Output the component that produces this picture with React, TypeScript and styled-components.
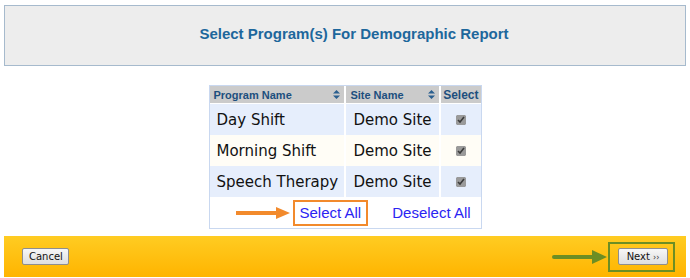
import React from "react";
import styled, { createGlobalStyle } from "styled-components";

const GlobalStyle = createGlobalStyle`
  html, body { margin: 0; padding: 0; background: #ffffff; }
  body { font-family: "DejaVu Sans", Verdana, sans-serif; }
`;

const Page = styled.div`
  width: 690px;
  height: 278px;
  box-sizing: border-box;
  padding: 5px 4px 0 4px;
  display: flex;
  flex-direction: column;
  overflow: hidden;
`;

const TitleBox = styled.div`
  height: 61px;
  box-sizing: border-box;
  background: #ededed;
  border: 1px solid #a6bacd;
  display: flex;
  align-items: center;
  justify-content: center;
  padding: 0 0 4px 18px;
`;

const Title = styled.h1`
  margin: 0;
  font-family: "Liberation Sans", Arial, sans-serif;
  font-size: 15px;
  font-weight: bold;
  color: #1d679c;
`;

const Content = styled.div`
  display: flex;
  justify-content: center;
  padding: 19px 0 7px 0;
`;

const Table = styled.table`
  border-collapse: separate;
  border-spacing: 0;
  border: 1px solid #c9d8f0;
  width: 273px;
`;

const HeadCell = styled.th<{ $w: number }>`
  width: ${(p) => p.$w}px;
  height: 18px;
  padding: 0 4px 0 4px;
  background: #cbcbcb;
  border-right: 2px solid #ffffff;
  border-bottom: 1px solid #ffffff;
  font-family: "Liberation Sans", Arial, sans-serif;
  font-size: 11px;
  font-weight: bold;
  color: #1d4f7e;
  text-align: left;
  white-space: nowrap;
  box-sizing: border-box;
  &:last-child { border-right: none; padding: 0 2px; font-size: 12px; text-align: center; }
`;

const HeadInner = styled.div`
  display: flex;
  align-items: center;
  justify-content: space-between;
`;

const Row = styled.tr<{ $alt: boolean }>`
  background: ${(p) => (p.$alt ? "#fffdf6" : "#e6eefc")};
`;

const Cell = styled.td`
  height: 31px;
  box-sizing: border-box;
  padding: 0 5px 0 7px;
  border-right: 2px solid #ffffff;
  font-family: "DejaVu Sans", Verdana, sans-serif;
  font-size: 15px;
  color: #111111;
  white-space: nowrap;
  &:last-child { border-right: none; text-align: center; padding: 0; }
`;

const Check = styled.input`
  width: 10px;
  height: 10px;
  margin: 0;
  accent-color: #9a9a9a;
  vertical-align: middle;
`;

const FootCell = styled.td`
  height: 31px;
  background: #ffffff;
  padding: 0;
`;

const FootInner = styled.div`
  display: flex;
  align-items: center;
  padding-left: 26px;
`;

const OrangeBox = styled.div`
  border: 2px solid #f28a2c;
  padding: 1px 5px 2px 5px;
  margin-left: 1px;
`;

const Link = styled.a`
  font-family: "Liberation Sans", Arial, sans-serif;
  font-size: 15px;
  color: #2a24f2;
  text-decoration: none;
  cursor: pointer;
`;

const DeselectLink = styled(Link)`
  margin-left: 24px;
`;

const Bar = styled.div`
  height: 41px;
  box-sizing: border-box;
  background: linear-gradient(#ffcc22, #ffb400);
  display: flex;
  align-items: center;
  justify-content: space-between;
  padding: 0 11px 0 18px;
`;

const Button = styled.button`
  height: 17px;
  box-sizing: border-box;
  padding: 0 6px;
  background: linear-gradient(#f7f7f7, #dedede);
  border: 1px solid #8e8e8e;
  border-radius: 2px;
  font-family: "DejaVu Sans", Verdana, sans-serif;
  font-size: 10px;
  color: #111;
  line-height: 15px;
`;

const CancelButton = styled(Button)`
  width: 47px;
`;

const NextButton = styled(Button)`
  width: 50px;
  padding: 0 4px;
`;

const Chev = styled.span`
  font-size: 8px;
  margin-left: 3px;
  color: #333;
`;

const NextGroup = styled.div`
  display: flex;
  align-items: center;
`;

const GreenBox = styled.div`
  border: 2px solid #6c8e24;
  padding: 4px 5px 5px 8px;
  display: flex;
`;

const SortIcon = () => (
  <svg width="7" height="9" viewBox="0 0 7 9">
    <path d="M3.5 0 L7 3.6 L0 3.6 Z M3.5 9 L7 5.4 L0 5.4 Z" fill="#2a5f8f" />
  </svg>
);

const rows = [
  { program: "Day Shift", site: "Demo Site" },
  { program: "Morning Shift", site: "Demo Site" },
  { program: "Speech Therapy", site: "Demo Site" },
];

export default function App() {
  return (
    <>
      <GlobalStyle />
      <Page>
        <TitleBox>
          <Title>Select Program(s) For Demographic Report</Title>
        </TitleBox>
        <Content>
          <Table>
            <thead>
              <tr>
                <HeadCell $w={137}>
                  <HeadInner>
                    Program Name <SortIcon />
                  </HeadInner>
                </HeadCell>
                <HeadCell $w={95}>
                  <HeadInner>
                    Site Name <SortIcon />
                  </HeadInner>
                </HeadCell>
                <HeadCell $w={39}>Select</HeadCell>
              </tr>
            </thead>
            <tbody>
              {rows.map((r, i) => (
                <Row key={r.program} $alt={i % 2 === 1}>
                  <Cell>{r.program}</Cell>
                  <Cell>{r.site}</Cell>
                  <Cell>
                    <Check type="checkbox" defaultChecked />
                  </Cell>
                </Row>
              ))}
              <tr>
                <FootCell colSpan={3}>
                  <FootInner>
                    <svg width="56" height="12" viewBox="0 0 56 12">
                      <path d="M0 6 H44" stroke="#f28a2c" strokeWidth="4" strokeLinecap="round" />
                      <path d="M40 0 L54 6 L40 12 Z" fill="#f28a2c" />
                    </svg>
                    <OrangeBox>
                      <Link>Select All</Link>
                    </OrangeBox>
                    <DeselectLink>Deselect All</DeselectLink>
                  </FootInner>
                </FootCell>
              </tr>
            </tbody>
          </Table>
        </Content>
        <Bar>
          <CancelButton>Cancel</CancelButton>
          <NextGroup>
            <svg width="56" height="14" viewBox="0 0 56 14">
              <path d="M2 7 H44" stroke="#6c8e24" strokeWidth="4" strokeLinecap="round" />
              <path d="M40 0 L55 7 L40 14 Z" fill="#6c8e24" />
            </svg>
            <GreenBox>
              <NextButton>
                Next<Chev>››</Chev>
              </NextButton>
            </GreenBox>
          </NextGroup>
        </Bar>
      </Page>
    </>
  );
}
